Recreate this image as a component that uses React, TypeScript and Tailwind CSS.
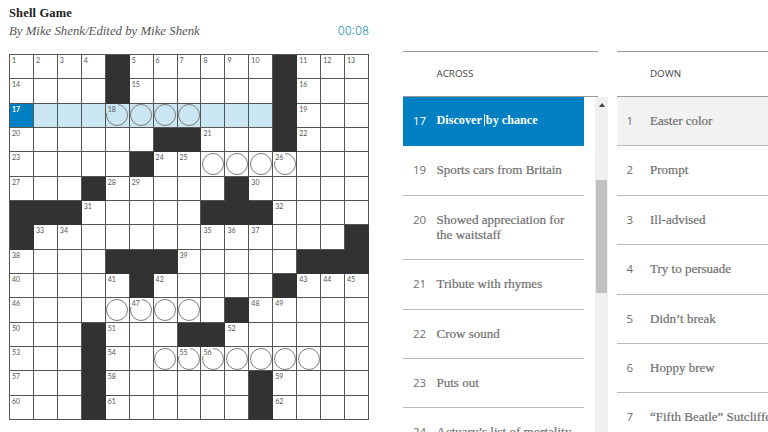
import clsx from "clsx";

// "#" block, "o" circled square, "." plain square
const ROWS = [
  "....#......#...",
  "....#......#...",
  "....oooo...#...",
  "......##...#...",
  ".....#..oooo...",
  "...#.....#.....",
  "###.....###....",
  "#.............#",
  "....###.....###",
  ".....#.....#...",
  "....oooo.#.....",
  "...#...##......",
  "...#..ooooooo..",
  "...#......#....",
  "...#......#....",
];

const ACTIVE_ROW = 2;
const ACTIVE_END = 10;

type Cell = {
  key: string;
  block: boolean;
  circle: boolean;
  current: boolean;
  inWord: boolean;
  label?: number;
};

function isBlock(row: number, col: number) {
  const cell = ROWS[row]?.[col];
  return cell === undefined || cell === "#";
}

function buildCells(): Cell[] {
  let next = 1;
  return ROWS.flatMap((line, row) =>
    line.split("").map((char, col) => {
      const block = char === "#";
      const startsAcross = isBlock(row, col - 1) && !isBlock(row, col + 1);
      const startsDown = isBlock(row - 1, col) && !isBlock(row + 1, col);
      return {
        key: `${row}-${col}`,
        block,
        circle: char === "o",
        current: row === ACTIVE_ROW && col === 0,
        inWord: row === ACTIVE_ROW && col > 0 && col <= ACTIVE_END,
        label: !block && (startsAcross || startsDown) ? next++ : undefined,
      };
    }),
  );
}

const CELLS = buildCells();

type Clue = { number: number; text: string };

const ACROSS: Clue[] = [
  { number: 17, text: "Discover by chance" },
  { number: 19, text: "Sports cars from Britain" },
  { number: 20, text: "Showed appreciation for the waitstaff" },
  { number: 21, text: "Tribute with rhymes" },
  { number: 22, text: "Crow sound" },
  { number: 23, text: "Puts out" },
  { number: 24, text: "Actuary’s list of mortality" },
];

const DOWN: Clue[] = [
  { number: 1, text: "Easter color" },
  { number: 2, text: "Prompt" },
  { number: 3, text: "Ill-advised" },
  { number: 4, text: "Try to persuade" },
  { number: 5, text: "Didn’t break" },
  { number: 6, text: "Hoppy brew" },
  { number: 7, text: "“Fifth Beatle” Sutcliffe" },
];

function Square({ cell }: { cell: Cell }) {
  return (
    <div
      className={clsx(
        "relative flex items-center justify-center border-r border-b",
        cell.block ? "border-[#323232] bg-[#323232]" : "border-[#555]",
        cell.current && "bg-[#0080c3]",
        cell.inWord && "bg-[#cbe6f3]",
      )}
    >
      {cell.circle && <span className="size-[22px] shrink-0 rounded-full border-[1.5px] border-[#7d7d7d]" />}
      {cell.label && (
        <span
          className={clsx(
            "absolute top-0 left-0 pt-px pl-[2px] font-['Lato','Open_Sans',sans-serif] text-[7px] leading-[8px]",
            cell.current ? "font-bold text-white" : "text-[#555]",
            cell.circle && "min-w-[12px]",
            cell.circle && (cell.inWord ? "bg-[#cbe6f3]" : "bg-white"),
          )}
        >
          {cell.label}
        </span>
      )}
    </div>
  );
}

function ClueRow({ clue, variant }: { clue: Clue; variant?: "active" | "crossing" }) {
  return (
    <li
      className={clsx(
        "flex min-h-[49.4px] border-b pt-4 pr-2 pb-[17.4px] pl-[10px]",
        variant === "active" ? "border-[#0080c3] bg-[#0080c3] text-white" : "border-[#bbb] text-[#6e6e6e]",
        variant === "crossing" && "bg-[#f2f2f2]",
      )}
    >
      <span className="w-[23.5px] shrink-0 font-['Open_Sans',sans-serif] text-[11.5px] leading-[15px]">
        {clue.number}
      </span>
      {variant === "active" ? (
        <span className="font-['Liberation_Serif',serif] text-[12.2px] leading-[15px] font-bold whitespace-nowrap">
          Discover
          <span className="mr-px ml-[2px] inline-block h-3 w-px bg-white align-[-2px]" />
          by chance
        </span>
      ) : (
        <span className="font-['Liberation_Serif',serif] text-[13px] leading-[15px] [-webkit-text-stroke:0.2px]">
          {clue.text}
        </span>
      )}
    </li>
  );
}

function ListHeader({ title }: { title: string }) {
  return (
    <h2 className="h-[46px] border-y border-[#999] pt-[14px] pl-[33.5px] font-['Open_Sans',sans-serif] text-[9.8px] leading-4 text-[#444]">
      {title}
    </h2>
  );
}

export default function App() {
  return (
    <main className="flex h-[432px] w-[768px] overflow-hidden bg-white">
      {/* Puzzle */}
      <section className="ml-[9px] w-[360px] shrink-0 pt-[6px] font-['Liberation_Serif',serif]">
        <h1 className="text-[12.5px] leading-[15px] font-bold tracking-[0.15px] text-[#222]">Shell Game</h1>
        <div className="mt-[3px] flex h-[15px] items-center justify-between">
          <p className="text-[12.8px] leading-[15px] text-[#555] italic">By Mike Shenk/Edited by Mike Shenk</p>
          <time className="font-['Inter',sans-serif] text-[11.4px] leading-[15px] font-light text-[#2b93b5]">00:08</time>
        </div>
        <div className="mt-[15px] grid h-[366px] w-[360px] grid-cols-15 grid-rows-15 border-t border-l border-[#555]">
          {CELLS.map((cell) => (
            <Square key={cell.key} cell={cell} />
          ))}
        </div>
      </section>

      {/* Across */}
      <section className="ml-[34px] w-[205px] shrink-0 pt-[51px]">
        <div className="w-[195px]">
          <ListHeader title="ACROSS" />
        </div>
        <div className="flex h-[335px] overflow-hidden">
          <ul className="w-[181px] shrink-0">
            {ACROSS.map((clue, i) => (
              <ClueRow key={clue.number} clue={clue} variant={i === 0 ? "active" : undefined} />
            ))}
          </ul>
          <div className="ml-[11px] flex w-[13px] flex-col items-center bg-[#f0f0f0] pt-[6px]">
            <svg className="h-1 w-[6px]" viewBox="0 0 6 4" fill="#444">
              <path d="M3 0 6 4H0z" />
            </svg>
            <div className="mt-[73px] h-[113px] w-[11px] bg-[#c1c1c1]" />
          </div>
        </div>
      </section>

      {/* Down */}
      <section className="ml-[8.5px] w-[195px] shrink-0 pt-[51px]">
        <ListHeader title="DOWN" />
        <ul className="w-[181px]">
          {DOWN.map((clue, i) => (
            <ClueRow key={clue.number} clue={clue} variant={i === 0 ? "crossing" : undefined} />
          ))}
        </ul>
      </section>
    </main>
  );
}
